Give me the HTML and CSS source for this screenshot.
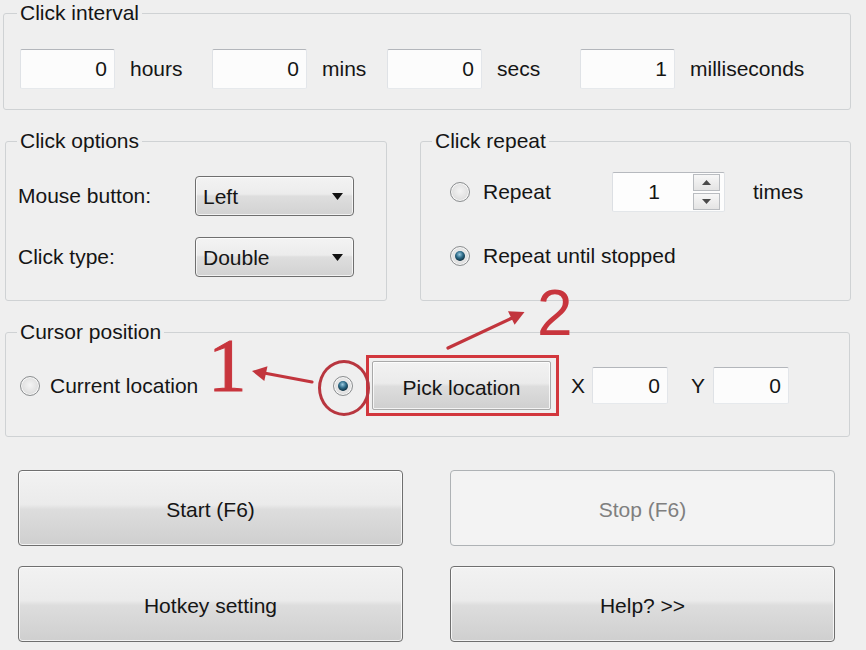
FILE: index.html
```html
<!DOCTYPE html>
<html lang="en">
<head>
<meta charset="utf-8">
<title>Auto Clicker</title>
<link rel="stylesheet" href="styles.css">
</head>
<body>
<div class="app">
  <fieldset class="group g-interval">
    <legend>Click interval</legend>
    <div class="interval-row">
      <div class="textbox tb-interval">0</div><span class="unit">hours</span>
      <div class="textbox tb-interval">0</div><span class="unit">mins</span>
      <div class="textbox tb-interval">0</div><span class="unit">secs</span>
      <div class="textbox tb-interval">1</div><span class="unit">milliseconds</span>
    </div>
  </fieldset>

  <div class="row2">
    <fieldset class="group g-options">
      <legend>Click options</legend>
      <div class="options-grid">
        <span class="lbl">Mouse button:</span>
        <div class="combo"><span>Left</span><svg class="caret" width="11" height="7" viewBox="0 0 11 7"><path d="M0 0H11L5.5 7Z" fill="#111"/></svg></div>
        <span class="lbl">Click type:</span>
        <div class="combo"><span>Double</span><svg class="caret" width="11" height="7" viewBox="0 0 11 7"><path d="M0 0H11L5.5 7Z" fill="#111"/></svg></div>
      </div>
    </fieldset>

    <fieldset class="group g-repeat">
      <legend>Click repeat</legend>
      <div class="repeat-body">
        <div class="repeat-row">
          <label class="opt opt-repeat"><span class="radio"></span><span class="opt-text">Repeat</span></label>
          <div class="spinner">
            <span class="spin-val">1</span>
            <span class="spin-btns">
              <span class="spin-btn"><svg width="9" height="5" viewBox="0 0 9 5"><path d="M0 5L4.5 0L9 5Z" fill="#4a4a4a"/></svg></span>
              <span class="spin-btn"><svg width="9" height="5" viewBox="0 0 9 5"><path d="M0 0H9L4.5 5Z" fill="#4a4a4a"/></svg></span>
            </span>
          </div>
          <span class="times">times</span>
        </div>
        <div class="repeat-row">
          <label class="opt"><span class="radio on"></span><span class="opt-text">Repeat until stopped</span></label>
        </div>
      </div>
    </fieldset>
  </div>

  <fieldset class="group g-cursor">
    <legend>Cursor position</legend>
    <div class="cursor-row">
      <label class="opt opt-current"><span class="radio"></span><span class="opt-text opt-text-near">Current location</span></label>
      <span class="pick-radio"><span class="radio on"></span></span>
      <span class="pick-mark"><button class="btn btn-pick" type="button">Pick location</button></span>
      <span class="coord-lbl coord-x">X</span>
      <div class="textbox tb-coord">0</div>
      <span class="coord-lbl coord-y">Y</span>
      <div class="textbox tb-coord">0</div>
    </div>
  </fieldset>

  <div class="actions">
    <button class="btn btn-big" type="button">Start (F6)</button>
    <button class="btn btn-big btn-disabled" type="button">Stop (F6)</button>
    <button class="btn btn-big" type="button">Hotkey setting</button>
    <button class="btn btn-big" type="button">Help? &gt;&gt;</button>
  </div>

  <svg class="annot" width="866" height="650" viewBox="0 0 866 650">
    <line x1="312" y1="382" x2="264" y2="373" stroke="#c2353d" stroke-width="3.2" stroke-linecap="round"/>
    <path d="M252 371L267.5 366.2L264.3 381Z" fill="#c2353d"/>
    <line x1="448" y1="348" x2="512" y2="318" stroke="#c2353d" stroke-width="3.2" stroke-linecap="round"/>
    <path d="M524.5 312L514.6 324.8L508 311.2Z" fill="#c2353d"/>
  </svg>
  <span class="num num-1">1</span>
  <span class="num num-2">2</span>
</div>
</body>
</html>
```

FILE: styles.css
```css
* { box-sizing: border-box; }

html, body {
  margin: 0;
  padding: 0;
}

body {
  width: 866px;
  height: 650px;
  overflow: hidden;
  background: #efefef;
  font-family: "Liberation Sans", Arial, sans-serif;
  font-size: 21px;
  color: #151515;
}

.app {
  position: relative;
  width: 866px;
  height: 650px;
  padding-top: 1px;
}

/* group boxes */
.group {
  margin: 0;
  padding: 0;
  min-width: 0;
  border: 1px solid #cfd2d4;
  border-radius: 3px;
}

.group legend {
  margin-left: 11px;
  padding: 0 3px;
  font-size: 21px;
  line-height: 24px;
  color: #151515;
}

.g-interval {
  margin-left: 3px;
  width: 848px;
}

.g-interval legend { margin-left: 13px; }

.interval-row {
  display: grid;
  grid-template-columns: 95px 97px 95px 80px 95px 98px 95px auto;
  align-items: center;
  padding: 24px 0 20px 16px;
}

.unit { padding-left: 15px; }

/* text boxes */
.textbox {
  background: #fcfcfc;
  border: 1px solid;
  border-color: #b3b6bb #e3e6ea #e6e9ec #dfe2e6;
  border-radius: 2px;
  text-align: right;
  padding-right: 7px;
  display: flex;
  align-items: center;
  justify-content: flex-end;
}

.tb-interval { height: 40px; }

.tb-coord {
  width: 76px;
  height: 37px;
}

/* row 2 */
.row2 {
  display: flex;
  margin: 19px 0 0 5px;
}

.g-options { width: 382px; }

.g-repeat {
  width: 431px;
  margin-left: 33px;
}

.options-grid {
  display: grid;
  grid-template-columns: 177px 159px;
  grid-auto-rows: 40px;
  row-gap: 21px;
  align-items: center;
  padding: 23px 0 23px 12px;
}

.combo {
  height: 40px;
  display: flex;
  align-items: center;
  justify-content: space-between;
  padding: 2px 10px 0 7px;
  border: 1px solid #6f6f6f;
  border-radius: 4px;
  background: linear-gradient(#f3f3f3 0%, #ececec 45%, #dedede 50%, #d2d2d2 100%);
  box-shadow: inset 0 0 0 1px rgba(255,255,255,0.7);
}

.caret { display: block; margin-top: -2px; }

.repeat-body {
  display: flex;
  flex-direction: column;
  gap: 24px;
  padding: 19px 0 0 29px;
}

.repeat-row {
  display: flex;
  align-items: center;
  height: 40px;
}

.opt {
  display: flex;
  align-items: center;
}

.opt-repeat { width: 162px; }

.opt-text { margin-left: 13px; }

.radio {
  position: relative;
  flex: none;
  width: 20px;
  height: 20px;
  border-radius: 50%;
  border: 1px solid #8b8e90;
  background: radial-gradient(circle at 50% 45%, #f4f4f4 0%, #e2e2e2 55%, #cfcfcf 100%);
  box-shadow: inset 0 0 0 1px #fafafa;
}

.radio.on::after {
  content: "";
  position: absolute;
  left: 4px;
  top: 4px;
  width: 10px;
  height: 10px;
  border-radius: 50%;
  background: radial-gradient(circle at 45% 35%, #9ccbe0 0%, #2d6b88 40%, #0f2f40 75%, #0a1d28 100%);
}

.spinner {
  width: 113px;
  height: 40px;
  display: flex;
  align-items: stretch;
  background: #fdfdfd;
  border: 1px solid;
  border-color: #b6b9be #e0e3e7 #e3e6e9 #dcdfe3;
  border-radius: 2px;
}

.spin-val {
  flex: 1;
  display: flex;
  align-items: center;
  justify-content: center;
  padding-left: 2px;
}

.spin-btns {
  display: flex;
  flex-direction: column;
  justify-content: center;
  gap: 2px;
  width: 31px;
  padding-right: 4px;
}

.spin-btn {
  height: 17px;
  display: flex;
  align-items: center;
  justify-content: center;
  border: 1px solid #b9bcc0;
  background: linear-gradient(#f7f7f7, #e4e4e4);
}

.times { margin-left: 28px; }

/* cursor position */
.g-cursor {
  margin: 19px 0 0 5px;
  width: 845px;
}

.cursor-row {
  display: flex;
  align-items: center;
  height: 92px;
  padding: 17px 0 26px 14px;
}

.opt-current { width: 313px; }

.opt-text-near { margin-left: 10px; }

.pick-radio {
  position: relative;
  display: flex;
}

.pick-radio::before {
  content: "";
  position: absolute;
  left: -15px;
  top: -16px;
  width: 46px;
  height: 50px;
  border: 3px solid #b8363f;
  border-radius: 50%;
}

.pick-mark {
  display: flex;
  margin-left: 13px;
  padding: 3px 5px 3px 3px;
  border: 3px solid #d2373d;
}

.btn {
  font-family: "Liberation Sans", Arial, sans-serif;
  font-size: 21px;
  color: #151515;
  border: 1px solid #6f6f6f;
  border-radius: 4px;
  background: linear-gradient(#f2f2f2 0%, #ebebeb 45%, #dddddd 52%, #cfcfcf 100%);
  box-shadow: inset 0 0 0 1px rgba(255,255,255,0.75);
  padding: 0;
  margin: 0;
}

.btn-pick {
  width: 179px;
  height: 49px;
  border-color: #a9a9a9;
  border-radius: 2px;
  padding-top: 5px;
}

.coord-lbl {
  display: block;
}

.coord-x {
  margin-left: 12px;
  width: 21px;
}

.coord-y {
  margin-left: 23px;
  width: 22px;
}

/* action buttons */
.actions {
  display: grid;
  grid-template-columns: 385px 385px;
  grid-auto-rows: 76px;
  column-gap: 47px;
  row-gap: 20px;
  margin: 33px 0 0 18px;
}

.btn-big {
  width: 100%;
  height: 76px;
  padding-top: 3px;
}

.btn-disabled {
  color: #7f7f7f;
  border-color: #aeb2b5;
  background: #f3f3f3;
  box-shadow: none;
}

/* annotations */
.annot {
  position: absolute;
  left: 0;
  top: 0;
  pointer-events: none;
}

.num {
  position: absolute;
  color: #c8353d;
  line-height: 1;
}

.num-1 {
  left: 208px;
  top: 327px;
  font-family: "Liberation Serif", "Times New Roman", serif;
  font-size: 77px;
  -webkit-text-stroke: 1px #c8353d;
}

.num-2 {
  left: 537px;
  top: 281px;
  font-family: "Liberation Sans", Arial, sans-serif;
  font-size: 64px;
}
```
